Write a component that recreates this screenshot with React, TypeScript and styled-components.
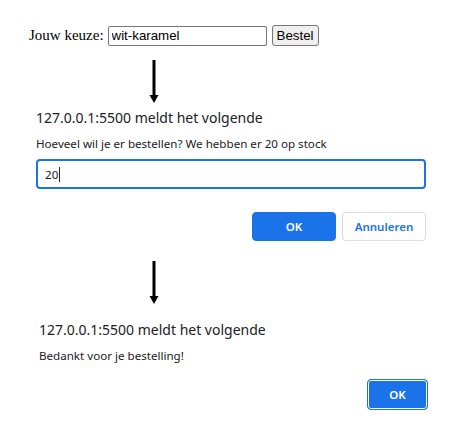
import React from "react";
import styled, { createGlobalStyle } from "styled-components";

const GlobalStyle = createGlobalStyle`
  body {
    margin: 0;
    background: #ffffff;
  }
`;

const Page = styled.div`
  display: flex;
  flex-direction: column;
  width: 466px;
  padding-top: 25px;
`;

const ChoiceRow = styled.div`
  display: flex;
  align-items: center;
  gap: 4px;
  height: 21px;
  padding-left: 29px;
  font-family: "Liberation Serif", serif;
  font-size: 15px;
  color: #000;
`;

const ChoiceInput = styled.input`
  box-sizing: border-box;
  width: 159px;
  height: 20px;
  padding: 1px 3px;
  border: 1px solid #767676;
  border-radius: 2px;
  font-family: "Liberation Sans", Arial, sans-serif;
  font-size: 13.3px;
  color: #000;
`;

const OrderButton = styled.button`
  box-sizing: border-box;
  height: 21px;
  padding: 0 4px;
  margin-left: 1px;
  border: 1px solid #767676;
  border-radius: 3px;
  background: #efefef;
  font-family: "Liberation Sans", Arial, sans-serif;
  font-size: 13.3px;
  color: #000;
`;

const ArrowWrap = styled.div<{ $top: number }>`
  display: flex;
  padding-left: 148px;
  margin-top: ${({ $top }) => $top}px;
  height: 43px;
`;

const Dialog = styled.section<{ $left: number; $width: number }>`
  display: flex;
  flex-direction: column;
  margin-left: ${({ $left }) => $left}px;
  width: ${({ $width }) => $width}px;
  font-family: "Segoe UI", "Noto Sans", "Open Sans", sans-serif;
  color: #202124;
`;

const Title = styled.div<{ $top: number }>`
  margin-top: ${({ $top }) => $top}px;
  font-size: 14px;
  line-height: 20px;
`;

const Message = styled.div`
  margin-top: 7px;
  font-size: 11.6px;
  line-height: 18px;
`;

const PromptInput = styled.div`
  box-sizing: border-box;
  display: flex;
  align-items: center;
  height: 30px;
  margin-top: 6px;
  padding-left: 7px;
  border: 2px solid #1a73e8;
  border-radius: 4px;
  font-size: 11.6px;
  color: #202124;
`;

const Caret = styled.span`
  display: inline-block;
  width: 1px;
  height: 15px;
  margin-left: 1px;
  background: #202124;
`;

const ButtonRow = styled.div<{ $top: number }>`
  display: flex;
  justify-content: flex-end;
  gap: 6px;
  margin-top: ${({ $top }) => $top}px;
`;

const DialogButton = styled.button<{ $primary?: boolean; $focused?: boolean; $width: number }>`
  box-sizing: border-box;
  width: ${({ $width }) => $width}px;
  height: ${({ $focused }) => ($focused ? 31 : 29)}px;
  border-radius: 4px;
  border: 1px solid ${({ $primary }) => ($primary ? "#1a73e8" : "#dadce0")};
  background: ${({ $primary }) => ($primary ? "#1a73e8" : "#ffffff")};
  color: ${({ $primary }) => ($primary ? "#ffffff" : "#1a73e8")};
  font-family: "Segoe UI", "Noto Sans", "Open Sans", sans-serif;
  font-size: 11.5px;
  font-weight: 600;
  box-shadow: ${({ $focused }) => ($focused ? "inset 0 0 0 1px #ffffff" : "none")};
`;

const DownArrow: React.FC = () => (
  <svg width="12" height="43" viewBox="0 0 12 43">
    <rect x="4.5" y="0" width="3" height="36" fill="#000" />
    <polygon points="1.5,35 10.5,35 6,43" fill="#000" />
  </svg>
);

export default function App() {
  return (
    <Page>
      <GlobalStyle />
      <ChoiceRow>
        <span>Jouw keuze:</span>
        <ChoiceInput defaultValue="wit-karamel" />
        <OrderButton>Bestel</OrderButton>
      </ChoiceRow>

      <ArrowWrap $top={14}>
        <DownArrow />
      </ArrowWrap>

      <Dialog $left={36} $width={390}>
        <Title $top={5}>127.0.0.1:5500 meldt het volgende</Title>
        <Message>Hoeveel wil je er bestellen? We hebben er 20 op stock</Message>
        <PromptInput>
          20
          <Caret />
        </PromptInput>
        <ButtonRow $top={23}>
          <DialogButton $primary $width={84}>OK</DialogButton>
          <DialogButton $width={84}>Annuleren</DialogButton>
        </ButtonRow>
      </Dialog>

      <ArrowWrap $top={20}>
        <DownArrow />
      </ArrowWrap>

      <Dialog $left={39} $width={389}>
        <Title $top={16}>127.0.0.1:5500 meldt het volgende</Title>
        <Message>Bedankt voor je bestelling!</Message>
        <ButtonRow $top={14}>
          <DialogButton $primary $focused $width={61}>OK</DialogButton>
        </ButtonRow>
      </Dialog>
    </Page>
  );
}
